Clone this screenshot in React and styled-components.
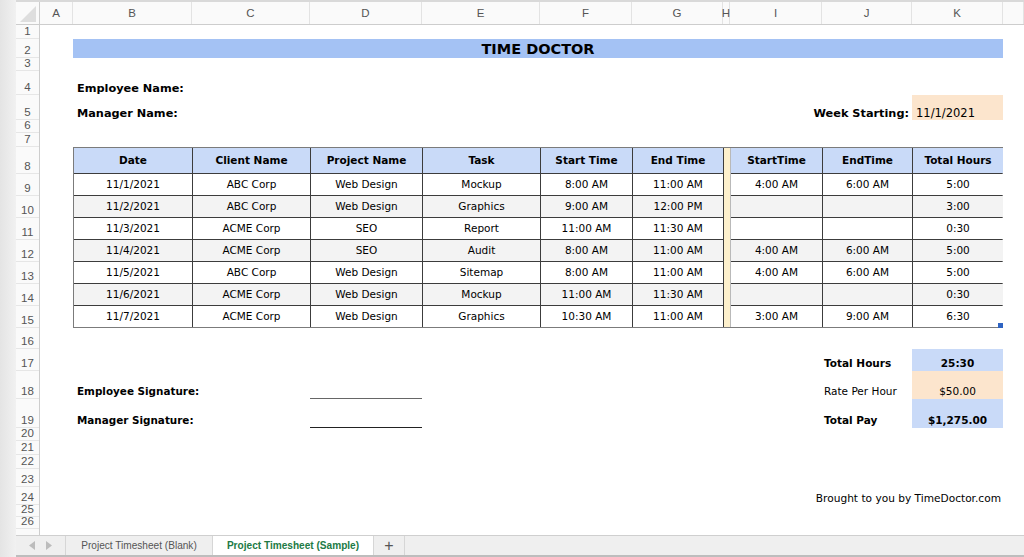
import React from 'react'
import styled, { createGlobalStyle, css } from 'styled-components'

const GlobalStyle = createGlobalStyle`
  html, body {
    margin: 0;
    padding: 0;
    background: #fff;
  }
  body {
    width: 1024px;
    height: 557px;
    overflow: hidden;
    font-family: "DejaVu Sans", Verdana, sans-serif;
    color: #000;
  }
`

// column letters and their widths in px
const COLUMNS = [
  ['A', 33], ['B', 119], ['C', 118], ['D', 112], ['E', 118], ['F', 92],
  ['G', 91], ['H', 7], ['I', 92], ['J', 90], ['K', 91], ['', 21],
]

// row heights in px, row 1 first
const ROW_HEIGHTS = [
  14, 19, 13, 24, 25, 13, 14, 27, 22, 22, 22, 22, 22, 22, 22,
  21, 22, 28, 29, 13, 14, 14, 18, 18, 12, 12, 18,
]

const HEADINGS = ['Date', 'Client Name', 'Project Name', 'Task', 'Start Time', 'End Time', 'StartTime', 'EndTime', 'Total Hours']

const ENTRIES = [
  ['11/1/2021', 'ABC Corp', 'Web Design', 'Mockup', '8:00 AM', '11:00 AM', '4:00 AM', '6:00 AM', '5:00'],
  ['11/2/2021', 'ABC Corp', 'Web Design', 'Graphics', '9:00 AM', '12:00 PM', '', '', '3:00'],
  ['11/3/2021', 'ACME Corp', 'SEO', 'Report', '11:00 AM', '11:30 AM', '', '', '0:30'],
  ['11/4/2021', 'ACME Corp', 'SEO', 'Audit', '8:00 AM', '11:00 AM', '4:00 AM', '6:00 AM', '5:00'],
  ['11/5/2021', 'ABC Corp', 'Web Design', 'Sitemap', '8:00 AM', '11:00 AM', '4:00 AM', '6:00 AM', '5:00'],
  ['11/6/2021', 'ACME Corp', 'Web Design', 'Mockup', '11:00 AM', '11:30 AM', '', '', '0:30'],
  ['11/7/2021', 'ACME Corp', 'Web Design', 'Graphics', '10:30 AM', '11:00 AM', '3:00 AM', '9:00 AM', '6:30'],
]

const Window = styled.div`
  display: flex;
  width: 1024px;
  height: 557px;
  overflow: hidden;
`

const Gutter = styled.div`
  width: 16px;
  flex-shrink: 0;
  background: linear-gradient(to right, #e4e4e4, #f1f1f1);
`

const Main = styled.div`
  flex: 1;
  display: flex;
  flex-direction: column;
  min-width: 0;
`

const ColumnBar = styled.div`
  display: flex;
  height: 22px;
  border-top: 2px solid #d9d9d9;
  border-bottom: 1px solid #cdcdcd;
  background: #fafafa;
  flex-shrink: 0;
`

const Corner = styled.div`
  width: 24px;
  box-sizing: border-box;
  border-right: 1px solid #cdcdcd;
  display: flex;
  align-items: flex-end;
  justify-content: flex-end;
  padding: 0 3px 2px 0;
`

const ColHead = styled.div`
  width: ${p => p.$w}px;
  flex-shrink: 0;
  box-sizing: border-box;
  border-right: 1px solid #e3e3e3;
  display: flex;
  align-items: center;
  justify-content: center;
  font-family: "Liberation Sans", Arial, sans-serif;
  font-size: 11.5px;
  color: #555;
`

const Body = styled.div`
  flex: 1;
  display: flex;
  overflow: hidden;
`

const RowNumbers = styled.div`
  width: 24px;
  flex-shrink: 0;
  box-sizing: border-box;
  border-right: 1px solid #cdcdcd;
  background: #fafafa;
  display: flex;
  flex-direction: column;
`

const RowNum = styled.div`
  height: ${p => p.$h}px;
  flex-shrink: 0;
  box-sizing: border-box;
  border-bottom: 1px solid #e6e6e6;
  display: flex;
  align-items: flex-end;
  justify-content: center;
  font-family: "Liberation Sans", Arial, sans-serif;
  font-size: 11.5px;
  line-height: 12px;
  color: #555;
  padding-bottom: 1px;
`

const Sheet = styled.div`
  display: grid;
  grid-template-columns: ${COLUMNS.map(c => c[1] + 'px').join(' ')};
  grid-template-rows: ${ROW_HEIGHTS.map(h => h + 'px').join(' ')};
  align-content: start;
`

const Cell = styled.div`
  grid-column: ${p => p.$col};
  grid-row: ${p => p.$row};
  display: flex;
  align-items: flex-end;
  padding: 0 3px 1px;
  white-space: nowrap;
  min-width: 0;
  ${p => p.$bg && css`background: ${p.$bg};`}
`

const Title = styled(Cell)`
  align-items: center;
  justify-content: center;
  padding: 0;
  background: #a4c2f4;
  font-size: 14.5px;
  font-weight: bold;
`

const Label = styled(Cell)`
  font-size: ${p => (p.$small ? '10.4px' : '11.3px')};
  font-weight: bold;
  justify-content: ${p => (p.$right ? 'flex-end' : 'flex-start')};
  padding-left: 4px;
  padding-bottom: ${p => (p.$small ? '2px' : '0')};
`

const Field = styled(Cell)`
  font-size: 11.5px;
  padding-left: 4px;
  padding-bottom: 0;
`

const SignLine = styled(Cell)`
  border-bottom: 1px solid ${p => p.$tone};
`

const TotalLabel = styled(Cell)`
  font-size: 10.5px;
  font-weight: ${p => (p.$bold ? 'bold' : 'normal')};
  padding-left: 2px;
  padding-bottom: 2px;
`

const TotalValue = styled(Cell)`
  font-size: 10.5px;
  font-weight: ${p => (p.$bold ? 'bold' : 'normal')};
  justify-content: center;
  padding-bottom: 2px;
`

const Credit = styled(Cell)`
  font-size: 10.6px;
  justify-content: flex-end;
  padding-right: 2px;
  padding-bottom: 1px;
`

const Timesheet = styled.div`
  grid-column: 2 / 12;
  grid-row: 8 / 16;
  position: relative;
  display: grid;
  grid-template-columns: 118px 117px 111px 117px 91px 90px 6px 91px 89px 90px;
  grid-template-rows: 25px repeat(7, 21px);
  gap: 1px;
  background: #3c3c3c;
  border: 1px solid #7b7b7b;
`

const HeadCell = styled.div`
  background: #c9daf8;
  display: flex;
  align-items: center;
  justify-content: center;
  padding-bottom: 2px;
  font-size: 10.5px;
  font-weight: bold;
`

const DataCell = styled.div`
  background: ${p => (p.$shade ? '#f3f3f3' : '#fff')};
  display: flex;
  align-items: center;
  justify-content: center;
  padding-bottom: 1px;
  font-size: 10.5px;
  white-space: nowrap;
`

const Divider = styled.div`
  grid-column: 7;
  grid-row: 1 / -1;
  background: #fdf0cc;
  border-right: 1px solid #b9b9b9;
  margin-right: -1px;
`

const FillHandle = styled.span`
  position: absolute;
  right: -1px;
  bottom: -1px;
  width: 5px;
  height: 5px;
  background: #2f64c2;
`

const TabBar = styled.div`
  height: 22px;
  flex-shrink: 0;
  box-sizing: border-box;
  display: flex;
  background: #efefef;
  border-top: 1px solid #cfcfcf;
  border-bottom: 2px solid #bdbdbd;
`

const NavArrows = styled.div`
  width: 50px;
  display: flex;
  align-items: center;
  justify-content: center;
  gap: 11px;
  border-right: 1px solid #d6d6d6;
  box-sizing: border-box;
`

const Tab = styled.div`
  width: ${p => p.$w}px;
  box-sizing: border-box;
  display: flex;
  align-items: center;
  justify-content: center;
  border-right: 1px solid #d6d6d6;
  font-family: "Liberation Sans", Arial, sans-serif;
  font-size: 10.1px;
  color: ${p => (p.$active ? '#217a45' : '#555')};
  background: ${p => (p.$active ? '#fff' : 'transparent')};
  font-weight: ${p => (p.$active ? 600 : 'normal')};
`

const AddTab = styled(Tab)`
  font-size: 16px;
  font-weight: normal;
  color: #555;
`

const Arrow = ({ dir }) => (
  <svg width="6" height="9" viewBox="0 0 6 9">
    <polygon points={dir === 'left' ? '6,0 6,9 0,4.5' : '0,0 0,9 6,4.5'} fill="#bcbcbc" />
  </svg>
)

export default function App() {
  return (
    <>
      <GlobalStyle />
      <Window>
        <Gutter />
        <Main>
          <ColumnBar>
            <Corner>
              <svg width="16" height="16" viewBox="0 0 16 16">
                <polygon points="0,16 16,16 16,0" fill="#dedede" />
              </svg>
            </Corner>
            {COLUMNS.map(([id, w], i) => (
              <ColHead key={i} $w={w}>{id}</ColHead>
            ))}
          </ColumnBar>

          <Body>
            <RowNumbers>
              {ROW_HEIGHTS.map((h, i) => (
                <RowNum key={i} $h={h}>{i + 1}</RowNum>
              ))}
            </RowNumbers>

            <Sheet>
              <Title $col="2 / 12" $row={2}>TIME DOCTOR</Title>

              <Label $col="2 / 4" $row={4}>Employee Name:</Label>
              <Label $col="2 / 4" $row={5}>Manager Name:</Label>
              <Label $col="9 / 11" $row={5} $right>Week Starting:</Label>
              <Field $col={11} $row={5} $bg="#fce5cd">11/1/2021</Field>

              <Timesheet>
                <Divider />
                {HEADINGS.map(h => (
                  <HeadCell key={h}>{h}</HeadCell>
                ))}
                {ENTRIES.map((entry, r) =>
                  entry.map((v, c) => (
                    <DataCell key={r + '-' + c} $shade={r % 2 === 1}>{v}</DataCell>
                  ))
                )}
                <FillHandle />
              </Timesheet>

              <TotalLabel $col={10} $row={17} $bold>Total Hours</TotalLabel>
              <TotalValue $col={11} $row={17} $bg="#c9daf8" $bold>25:30</TotalValue>
              <TotalLabel $col={10} $row={18}>Rate Per Hour</TotalLabel>
              <TotalValue $col={11} $row={18} $bg="#fce5cd">$50.00</TotalValue>
              <TotalLabel $col={10} $row={19} $bold>Total Pay</TotalLabel>
              <TotalValue $col={11} $row={19} $bg="#c9daf8" $bold>$1,275.00</TotalValue>

              <Label $col="2 / 4" $row={18} $small>Employee Signature:</Label>
              <SignLine $col={4} $row={18} $tone="#666" />
              <Label $col="2 / 4" $row={19} $small>Manager Signature:</Label>
              <SignLine $col={4} $row={19} $tone="#222" />

              <Credit $col="8 / 12" $row={24}>Brought to you by TimeDoctor.com</Credit>
            </Sheet>
          </Body>

          <TabBar>
            <NavArrows>
              <Arrow dir="left" />
              <Arrow dir="right" />
            </NavArrows>
            <Tab $w={147}>Project Timesheet (Blank)</Tab>
            <Tab $w={161} $active>Project Timesheet (Sample)</Tab>
            <AddTab $w={31}>+</AddTab>
          </TabBar>
        </Main>
      </Window>
    </>
  )
}
